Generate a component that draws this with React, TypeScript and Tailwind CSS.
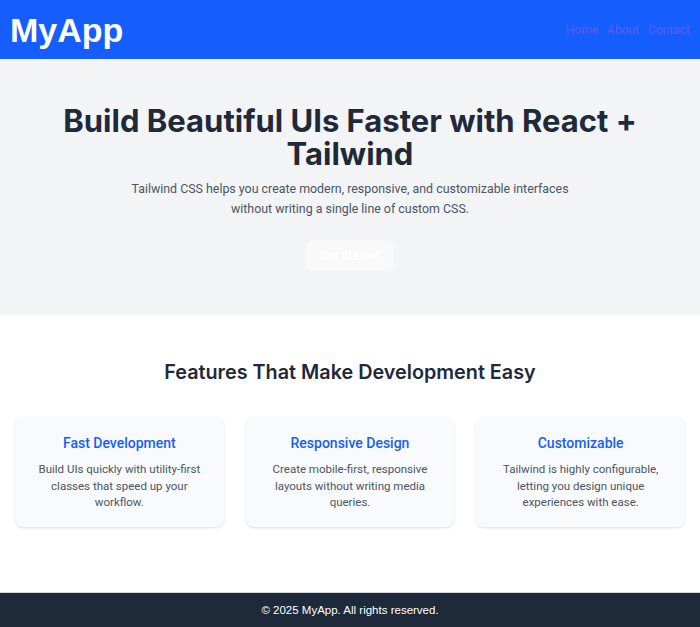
import React from 'react';

const features = [
  {
    title: 'Fast Development',
    text: 'Build UIs quickly with utility-first classes that speed up your workflow.',
  },
  {
    title: 'Responsive Design',
    text: 'Create mobile-first, responsive layouts without writing media queries.',
  },
  {
    title: 'Customizable',
    text: 'Tailwind is highly configurable, letting you design unique experiences with ease.',
  },
];

const App: React.FC = () => {
  return (
    <div className="min-h-[627px] flex flex-col bg-white font-['Roboto',sans-serif]">
      {/* Top bar */}
      <header className="h-[59px] bg-[#155dfc] flex items-center justify-between px-[10px]">
        <span className="font-['Liberation_Sans',Arial,sans-serif] text-[34px] font-bold text-white leading-none">
          MyApp
        </span>
        <nav className="flex gap-[9px] text-[12px] text-[#625cf0]">
          <a href="#">Home</a>
          <a href="#">About</a>
          <a href="#">Contact</a>
        </nav>
      </header>

      {/* Hero */}
      <section className="h-[256px] bg-[#f3f4f6] flex flex-col items-center pt-[45px] text-center">
        <h1 className="font-['Inter',sans-serif] text-[31px] font-bold leading-[33px] text-[#1e2939] max-w-[620px]">
          Build Beautiful UIs Faster with React + Tailwind
        </h1>
        <p className="mt-[9px] text-[12.4px] leading-[20px] text-[#4a5565] max-w-[460px]">
          Tailwind CSS helps you create modern, responsive, and customizable interfaces without writing a
          single line of custom CSS.
        </p>
        <button className="mt-[21px] h-[31px] px-[13px] rounded-md bg-[#f9f9fa] text-white text-[12px] font-semibold">
          Get Started
        </button>
      </section>

      {/* Features */}
      <section className="flex-1 px-[15px] pt-[43px]">
        <h2 className="text-center font-['Inter',sans-serif] text-[19.8px] font-semibold text-[#1e2939] leading-[28px]">
          Features That Make Development Easy
        </h2>
        <div className="mt-[31px] grid grid-cols-3 gap-[22px]">
          {features.map((f) => (
            <div
              key={f.title}
              className="h-[110px] rounded-lg bg-[#f9fafb] shadow-sm px-[20px] pt-[17px] text-center"
            >
              <h3 className="text-[14px] font-medium text-[#155dfc] leading-[18px]">{f.title}</h3>
              <p className="mt-[9px] text-[11.5px] leading-[16.5px] text-[#4a5565]">{f.text}</p>
            </div>
          ))}
        </div>
      </section>

      {/* Footer */}
      <footer className="h-[35px] pt-[2px] bg-[#1e2939] flex items-center justify-center border-t border-[#d1d5dc]">
        <span className="text-[11.5px] text-white font-['Liberation_Sans',Arial,sans-serif]">
          © 2025 MyApp. All rights reserved.
        </span>
      </footer>
    </div>
  );
};

export default App;
